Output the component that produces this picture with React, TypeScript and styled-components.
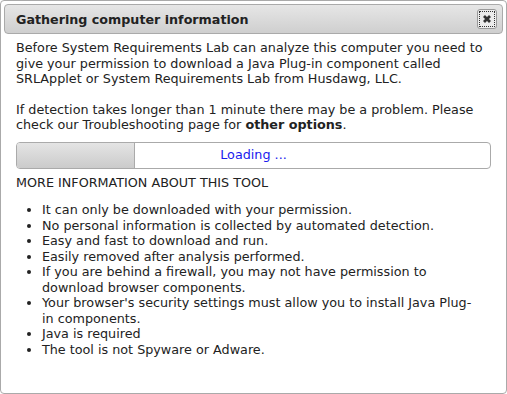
import React from "react";
import styled, { createGlobalStyle } from "styled-components";

const GlobalStyle = createGlobalStyle`
    html, body {
        margin: 0;
        padding: 0;
        background: #ffffff;
    }
`;

const Dialog = styled.div`
    box-sizing: border-box;
    width: 507px;
    height: 394px;
    border: 1px solid #aaaaaa;
    border-radius: 4px;
    padding: 3px;
    background: #ffffff;
    font-family: "DejaVu Sans", Verdana, sans-serif;
    color: #222222;
    display: flex;
    flex-direction: column;
`;

const TitleBar = styled.div`
    box-sizing: border-box;
    height: 30px;
    display: flex;
    align-items: center;
    justify-content: space-between;
    padding: 0 5px 0 11px;
    border: 1px solid #aaaaaa;
    border-radius: 4px;
    background: linear-gradient(#e6e6e6, #cfcfcf);

    .title {
        font-size: 12.7px;
        font-weight: 700;
        color: #222222;
    }
`;

const CloseButton = styled.div`
    box-sizing: border-box;
    width: 20px;
    height: 20px;
    border: 1px solid #999999;
    border-radius: 3px;
    background: #ececec;
    display: flex;
    align-items: center;
    justify-content: center;

    .inner {
        box-sizing: border-box;
        width: 16px;
        height: 16px;
        border: 1px dotted #333333;
        display: flex;
        align-items: center;
        justify-content: center;
    }
`;

const Body = styled.div`
    padding: 6px 12px 0 12px;
    font-size: 12.75px;
    line-height: 15.5px;

    p {
        margin: 0 0 15px 0;
    }

    p + p {
        margin-bottom: 9px;
    }
`;

const Progress = styled.div`
    box-sizing: border-box;
    position: relative;
    height: 27px;
    border: 1px solid #aaaaaa;
    border-radius: 4px;
    overflow: hidden;
    display: flex;
    margin-bottom: 6px;
`;

const ProgressFill = styled.div`
    box-sizing: border-box;
    height: 100%;
    background: linear-gradient(#e4e4e4, #cbcbcb);
    border-right: 1px solid #aaaaaa;
`;

const ProgressLabel = styled.div`
    position: absolute;
    inset: 0;
    display: flex;
    align-items: center;
    justify-content: center;
    color: #1a1aee;
`;

const SectionTitle = styled.div`
    margin-bottom: 12px;
`;

const List = styled.ul`
    margin: 0;
    padding: 0 12px 0 26px;

    li {
        margin: 0;
    }
`;

const items = [
    "It can only be downloaded with your permission.",
    "No personal information is collected by automated detection.",
    "Easy and fast to download and run.",
    "Easily removed after analysis performed.",
    "If you are behind a firewall, you may not have permission to download browser components.",
    "Your browser's security settings must allow you to install Java Plug-in components.",
    "Java is required",
    "The tool is not Spyware or Adware.",
];

export default function App() {
    const progress = 25;
    return (
        <>
            <GlobalStyle />
            <Dialog>
                <TitleBar>
                    <span className="title">Gathering computer information</span>
                    <CloseButton>
                        <div className="inner">
                            <svg width="10" height="10" viewBox="0 0 10 10">
                                <path
                                    d="M2 2 L8 8 M8 2 L2 8"
                                    stroke="#333"
                                    strokeWidth="2.8"
                                />
                            </svg>
                        </div>
                    </CloseButton>
                </TitleBar>
                <Body>
                    <p>
                        Before System Requirements Lab can analyze this computer you need to
                        give your permission to download a Java Plug-in component called
                        SRLApplet or System Requirements Lab from Husdawg, LLC.
                    </p>
                    <p>
                        If detection takes longer than 1 minute there may be a problem. Please
                        check our Troubleshooting page for <b>other options</b>.
                    </p>
                    <Progress>
                        <ProgressFill style={{ width: `${progress}%` }} />
                        <ProgressLabel>Loading ...</ProgressLabel>
                    </Progress>
                    <SectionTitle>MORE INFORMATION ABOUT THIS TOOL</SectionTitle>
                    <List>
                        {items.map((t) => (
                            <li key={t}>{t}</li>
                        ))}
                    </List>
                </Body>
            </Dialog>
        </>
    );
}
